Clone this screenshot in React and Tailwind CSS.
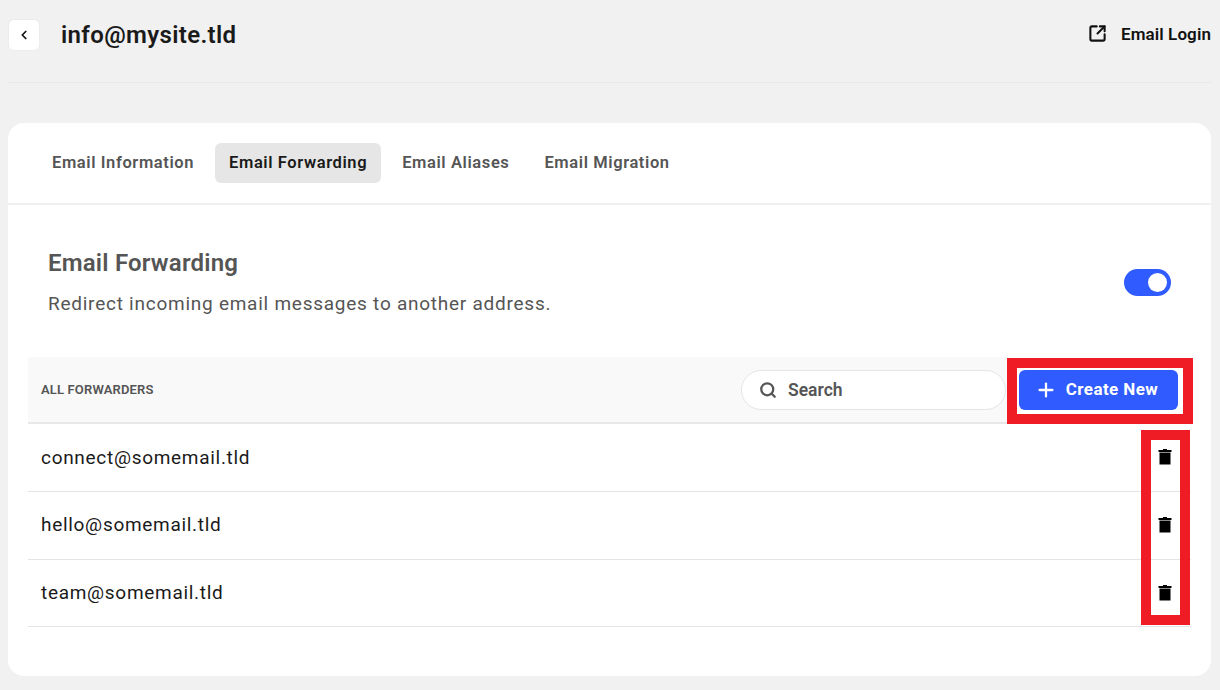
import React from 'react';
import { ChevronLeft, SquareArrowOutUpRight, Plus, Search } from 'lucide-react';

const forwarders = ['connect@somemail.tld', 'hello@somemail.tld', 'team@somemail.tld'];
const tabs = ['Email Information', 'Email Forwarding', 'Email Aliases', 'Email Migration'];

const TrashIcon = () => (
    <svg width="14" height="16" viewBox="0 0 14 16" className="block">
        <rect x="5" y="0" width="4" height="1.5" fill="#000" />
        <rect x="0.5" y="1" width="13" height="2" fill="#000" />
        <rect x="1.5" y="3" width="11" height="1.5" fill="#8a8a8a" />
        <rect x="1.5" y="4" width="11" height="11.5" fill="#000" />
    </svg>
);

const App = () => {
    return (
        <div className="min-h-[690px] bg-[#f1f1f1] px-2 pb-[14px] font-['Roboto',sans-serif] w-[1220px] overflow-hidden">
            {/* Header */}
            <div className="flex items-center justify-between w-[1203px] h-[83px] border-b border-[#e8e8e8] pb-[13px]">
                <div className="flex items-center">
                    <button className="w-8 h-8 rounded-md bg-white border border-[#ececec] flex items-center justify-center">
                        <ChevronLeft className="w-3.5 h-3.5 text-[#111]" strokeWidth={3} />
                    </button>
                    <h1 className="ml-[21px] text-2xl font-semibold text-[#1a1a1a] tracking-[0.35px]">info@mysite.tld</h1>
                </div>
                <div className="flex items-center">
                    <SquareArrowOutUpRight className="w-[19px] h-[19px] mb-0.5 text-[#111]" strokeWidth={2.6} />
                    <span className="ml-[14px] text-[17px] font-semibold text-[#111] tracking-[0.1px]">Email Login</span>
                </div>
            </div>

            {/* Card */}
            <div className="mt-10 w-[1203px] h-[553px] bg-white rounded-2xl">
                <div className="flex items-center gap-[7px] h-[82px] px-[30px] border-b-2 border-[#f0f0f0]">
                    {tabs.map((tab, i) => (
                        <div
                            key={tab}
                            className={`px-[14px] h-10 flex items-center rounded-md text-[16.5px] font-semibold tracking-[0.6px] ${i === 1 ? 'bg-[#e6e6e6] text-[#1a1a1a]' : 'text-[#555]'}`}
                        >
                            {tab}
                        </div>
                    ))}
                </div>

                <div className="flex items-center justify-between pl-10 pr-10 pt-[43px]">
                    <div>
                        <h2 className="text-2xl font-semibold text-[#555] leading-[30px] tracking-[0.2px]">Email Forwarding</h2>
                        <p className="mt-[11px] text-[19px] text-[#555] tracking-[0.75px] leading-[30px]">Redirect incoming email messages to another address.</p>
                    </div>
                    <div className="w-[47px] h-[27px] mb-[3px] rounded-full bg-[#2f5bff] flex items-center justify-end pr-1">
                        <div className="w-[19px] h-[19px] rounded-full bg-white" />
                    </div>
                </div>

                {/* Table */}
                <div className="relative mx-5 mt-[38px]">
                    <div className="flex items-center h-[67px] bg-[#f9f9f9] border-b-2 border-[#e8e8e8] pl-[13px]">
                        <span className="text-[13px] font-semibold text-[#555] tracking-[0.15px]">ALL FORWARDERS</span>
                        <div className="ml-auto mr-px w-[265px] h-10 rounded-full bg-white border border-[#e5e5e5] flex items-center pl-[17px]">
                            <Search className="w-[18px] h-[18px] text-[#555]" strokeWidth={3} />
                            <span className="ml-[11px] pt-px text-[17.5px] font-semibold text-[#555]">Search</span>
                        </div>
                        <div className="w-[184px] h-full bg-white flex items-center pl-3">
                            <button className="w-[159px] h-10 pr-1 rounded-md bg-[#2f5bff] flex items-center justify-center text-white">
                                <Plus className="w-[22px] h-[22px]" strokeWidth={2.5} />
                                <span className="ml-[9px] text-[17px] font-bold tracking-[0.4px]">Create New</span>
                            </button>
                        </div>
                    </div>
                    {forwarders.map((email) => (
                        <div key={email} className="flex items-center justify-between h-[67.75px] border-b border-[#e4e4e4] pl-[13px] pr-[19px]">
                            <span className="pt-px text-[19px] text-[#1a1a1a] tracking-[0.7px]">{email}</span>
                            <TrashIcon />
                        </div>
                    ))}

                    {/* Red highlight boxes */}
                    <div className="absolute left-[979px] top-[1px] w-[186px] h-[66px] border-[10px] border-[#ef1c25]" />
                    <div className="absolute left-[1113px] top-[73px] w-[49px] h-[195px] border-[10px] border-[#ef1c25]" />
                </div>
            </div>
        </div>
    );
};

export default App;
